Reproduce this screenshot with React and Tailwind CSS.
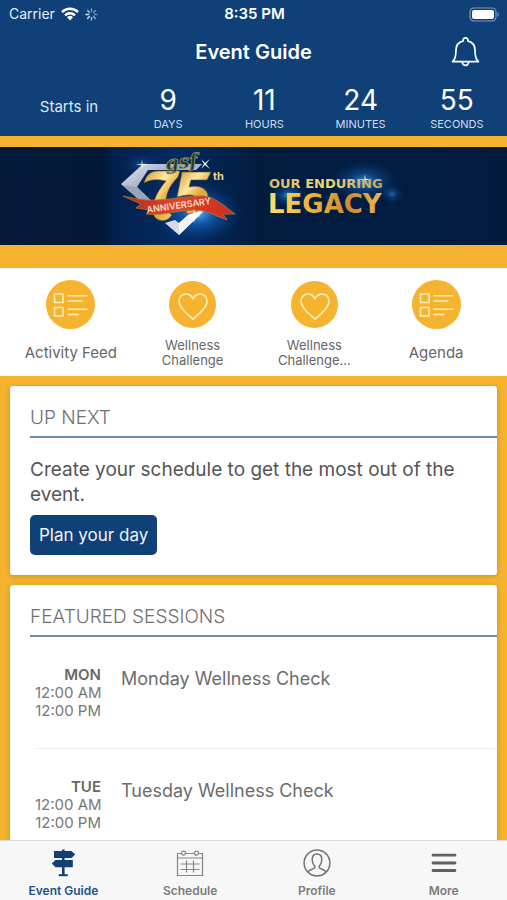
import React from "react";

const countdown = [
  { value: 9, label: "DAYS" },
  { value: 11, label: "HOURS" },
  { value: 24, label: "MINUTES" },
  { value: 55, label: "SECONDS" },
];

const sessions = [
  { day: "MON", start: "12:00 AM", end: "12:00 PM", title: "Monday Wellness Check" },
  { day: "TUE", start: "12:00 AM", end: "12:00 PM", title: "Tuesday Wellness Check" },
];

function WifiIcon() {
  return (
    <svg className="h-[14px] w-[18px]" viewBox="0 0 18 14" aria-hidden="true">
      <g fill="none" stroke="#fff" strokeWidth="2.4">
        <path d="M1 5.1A11.4 11.4 0 0 1 17 5.1" />
        <path d="M4 8.3A7.2 7.2 0 0 1 14 8.3" />
      </g>
      <path d="M6 10.3a4.3 4.3 0 0 1 6 0L9 13.6z" fill="#fff" />
    </svg>
  );
}

function SpinnerIcon() {
  return (
    <svg className="h-[13px] w-[13px]" viewBox="0 0 13 13" aria-hidden="true">
      <g stroke="#fff" strokeWidth="1.5" strokeLinecap="round">
        <path d="M6.5 1v2.6" opacity=".45" />
        <path d="M10.4 2.6 8.6 4.4" opacity=".4" />
        <path d="M12 6.5H9.4" opacity=".4" />
        <path d="M10.4 10.4 8.6 8.6" opacity=".5" />
        <path d="M6.5 12V9.4" opacity=".6" />
        <path d="M2.6 10.4 4.4 8.6" opacity=".75" />
        <path d="M1 6.5h2.6" opacity=".85" />
        <path d="M2.6 2.6 4.4 4.4" opacity=".6" />
      </g>
    </svg>
  );
}

function BatteryIcon() {
  return (
    <svg className="h-[15px] w-[31px]" viewBox="0 0 31 15" aria-hidden="true">
      <rect x="1" y="1" width="26" height="13" rx="4" fill="none" stroke="#7f99bb" strokeWidth="1.2" />
      <rect x="3" y="3" width="22" height="9" rx="2" fill="#fff" />
      <path d="M28.5 5.2c1.8.7 1.8 3.9 0 4.6z" fill="#7f99bb" />
    </svg>
  );
}

function BellIcon() {
  return (
    <svg className="h-[32px] w-[29px]" viewBox="0 0 29 32" fill="none" stroke="#fff" strokeWidth="1.7" strokeLinejoin="round" aria-hidden="true">
      <path d="M12.2 4.9a2.4 2.4 0 1 1 4.6 0c4.7 1.2 7.2 4.6 7.2 9.4 0 5.2.2 8.4 3.4 11.4H1.6C4.8 22.7 5 19.5 5 14.3c0-4.8 2.5-8.2 7.2-9.4z" />
      <path d="M11.3 25.8a3.2 3.6 0 0 0 6.4 0" />
    </svg>
  );
}

function ListIcon() {
  return (
    <svg className="h-[49px] w-[49px]" viewBox="0 0 49 49" aria-hidden="true">
      <circle cx="24.5" cy="24.5" r="24.5" fill="#f5b32f" />
      <g fill="none" stroke="#fff0b8" strokeWidth="1.5">
        <rect x="8.5" y="14" width="8.5" height="8.5" />
        <rect x="8.5" y="27.5" width="8.5" height="8.5" />
        <path d="M21.5 15.8h20M21.5 21h15M21.5 29.2h20M21.5 34.5h11" />
      </g>
    </svg>
  );
}

function HeartIcon() {
  return (
    <svg className="h-[47px] w-[47px]" viewBox="0 0 47 47" aria-hidden="true">
      <circle cx="23.5" cy="23.5" r="23.5" fill="#f5b32f" />
      <path
        d="M24 38.2C19.5 34 10 27.5 10 20.3c0-4.3 3-7.3 6.9-7.3 3 0 5.6 1.6 7.1 5 1.5-3.4 4.1-5 7.1-5 3.9 0 6.900 3 6.900 7.300 0 7.200-9.500 13.700-14 17.900z"
        fill="none"
        stroke="#fff0b8"
        strokeWidth="1.5"
        strokeLinejoin="round"
      />
    </svg>
  );
}

function SignpostIcon() {
  return (
    <svg className="h-[28px] w-[28px]" viewBox="0 0 28 28" fill="#123f78" aria-hidden="true">
      <path d="M13 .5h2.6V26H13z" />
      <path d="M5 2h17.500l3.700 3.500-3.700 3.500H5z" />
      <path d="M23.800 11H6.500L2.800 14.500 6.500 18.200h17.300z" />
      <path d="M9.800 25.200h9v2h-9z" />
    </svg>
  );
}

function CalendarIcon() {
  return (
    <svg className="h-[28px] w-[28px]" viewBox="0 0 28 28" fill="none" stroke="#858585" strokeWidth="1.2" aria-hidden="true">
      <path d="M5.5 4.5H1.5v22h25v-22h-4M9.5 4.5h9" />
      <circle cx="7.5" cy="4.2" r="2" />
      <circle cx="20.5" cy="4.2" r="2" />
      <path d="M1.5 9h25M4.5 15h19M4.5 20.5h19M10.5 11.5v12M17.5 11.5v12" />
    </svg>
  );
}

function ProfileIcon() {
  return (
    <svg className="h-[28px] w-[28px]" viewBox="0 0 28 28" fill="none" stroke="#747474" strokeWidth="1.5" aria-hidden="true">
      <circle cx="14" cy="14" r="12.9" />
      <path d="M4.7 22.8c1.5-1.7 4.3-2.4 6.3-3.4 1-.5 1-1.9.4-2.7-1.5-1.6-2.2-3.9-2.2-6.2 0-3.3 1.9-5.5 4.8-5.5s4.8 2.2 4.8 5.5c0 2.3-.7 4.6-2.2 6.2-.6.8-.6 2.2.4 2.7 2 1 4.8 1.7 6.3 3.4" />
    </svg>
  );
}

function MenuIcon() {
  return (
    <svg className="h-[28px] w-[28px]" viewBox="0 0 28 28" stroke="#616161" strokeWidth="2.8" strokeLinecap="round" aria-hidden="true">
      <path d="M3 6.2h22M3 14h22M3 21.5h22" />
    </svg>
  );
}

function Banner() {
  return (
    <svg className="block h-auto w-full" viewBox="0 0 507 98" role="img" aria-label="gsf 75th Anniversary, Our Enduring Legacy">
      <defs>
        <linearGradient id="night" x1="0" x2="1">
          <stop offset="0" stopColor="#031a3a" />
          <stop offset=".2" stopColor="#021936" />
          <stop offset=".22" stopColor="#03204b" />
          <stop offset=".35" stopColor="#042b61" />
          <stop offset=".495" stopColor="#021d42" />
          <stop offset=".505" stopColor="#011c3d" />
          <stop offset=".8" stopColor="#021d42" />
          <stop offset="1" stopColor="#031b3d" />
        </linearGradient>
        <radialGradient id="glow">
          <stop offset="0" stopColor="#5cabf0" />
          <stop offset=".35" stopColor="#1463b8" stopOpacity=".8" />
          <stop offset="1" stopColor="#063a7d" stopOpacity="0" />
        </radialGradient>
        <linearGradient id="gold" x1="0" x2="1" y1="0" y2="1">
          <stop offset="0" stopColor="#d09a35" />
          <stop offset=".35" stopColor="#ffe9a0" />
          <stop offset=".6" stopColor="#dfa53a" />
          <stop offset="1" stopColor="#f9dc82" />
        </linearGradient>
        <linearGradient id="goldText" x1="0" x2="1">
          <stop offset="0" stopColor="#f6df74" />
          <stop offset=".3" stopColor="#f4bd3c" />
          <stop offset=".7" stopColor="#d08a35" />
          <stop offset="1" stopColor="#e9b954" />
        </linearGradient>
        <linearGradient id="paleGold" x1="0" x2="1">
          <stop offset="0" stopColor="#d8bd68" />
          <stop offset=".5" stopColor="#f2d774" />
          <stop offset="1" stopColor="#bfa662" />
        </linearGradient>
        <linearGradient id="silver" x1="0" x2="1" y1="0" y2="1">
          <stop offset="0" stopColor="#e4e9f2" />
          <stop offset=".4" stopColor="#9daac2" />
          <stop offset="1" stopColor="#f1f4fa" />
        </linearGradient>
        <linearGradient id="ribbon" x1="0" x2="1">
          <stop offset="0" stopColor="#b52a1d" />
          <stop offset=".5" stopColor="#e2452b" />
          <stop offset="1" stopColor="#c72c1e" />
        </linearGradient>
      </defs>
      <rect width="507" height="98" fill="url(#night)" />
      <ellipse cx="198" cy="66" rx="44" ry="31" fill="url(#glow)" />
      <ellipse cx="142" cy="18" rx="20" ry="12" fill="url(#glow)" opacity=".35" />
      <ellipse cx="364" cy="34" rx="34" ry="20" fill="url(#glow)" opacity=".7" />
      <ellipse cx="288" cy="48" rx="18" ry="12" fill="url(#glow)" opacity=".7" />
      <ellipse cx="392" cy="47" rx="12" ry="10" fill="url(#glow)" opacity=".5" />

      <path d="M143 17 121 37l34 30 2-8-20-19 11-17h48l6-6z" fill="url(#silver)" />
      <path d="m122 38 15 2 18 18v8z" fill="#98a4ba" />
      <path d="m165 76 14 12 31-30-8-2-23 20-4-3z" fill="#d5dbe7" />
      <path d="M179 76v12l31-30-8-2z" fill="#f1f4fa" />

      <path d="M144 36c2-8 7-12 14-12h22l-2 6c-9 9-13 18-12 30 1 4 3 6 6 8-4 6-10 7-15 4-5-3-5-10-3-17 2-8 7-15 12-21-9-2-15-2-22 2z" fill="url(#gold)" stroke="#704b12" strokeWidth=".6" />
      <path d="M182 25h29l-4 8h-16l-2 7c12-3 20 3 19 11-1 9-10 15-21 16l-2-6c7-1 11-5 11-9 0-5-8-5-19-2z" fill="url(#gold)" stroke="#704b12" strokeWidth=".6" />
      <path d="m123 49 15 3c23 4 46-4 66-3 9 1 14 6 18 8l13 10h-12l4 6-17-7c-23-8-44 4-64 1l4-4-14-2 5-4z" fill="url(#ribbon)" stroke="#b3762c" strokeWidth=".8" />
      <text x="147" y="66" transform="rotate(-8 147 66)" fontFamily="Inter, sans-serif" fontSize="9" fontWeight="600" fill="#f8ddc9">ANNIVERSARY</text>
      <text x="166" y="23" transform="rotate(-6 166 23)" fontFamily="'DejaVu Serif', serif" fontSize="19" fontWeight="700" fontStyle="italic" fill="#22382f" stroke="#8f945c" strokeWidth=".8">gsf</text>
      <text x="213" y="33" fontFamily="Inter, sans-serif" fontSize="11" fontWeight="700" fill="#e8d68f">th</text>
      <g fill="#fff">
        <path d="m205 18-4 4 3-5-3-5 4 4 5-4-4 5 4 5z" />
        <path d="m142 12 .6 5 6 .6-6 .6-.6 5-.6-5-6-.6 6-.6z" opacity=".85" />
        <path d="m194 62 1 6 6 1-6 1-1 6-1-6-6-1 6-1z" />
        <path d="m365 27 .6 5 6 .6-6 .6-.6 5-.6-5-6-.6 6-.6z" />
      </g>

      <text x="269" y="41" fontFamily="'DejaVu Sans', sans-serif" fontSize="13" fontWeight="700" fill="url(#paleGold)">OUR ENDURING</text>
      <text x="268" y="66" fontFamily="'DejaVu Sans', sans-serif" fontSize="26" fontWeight="700" fill="url(#goldText)">LEGACY</text>
    </svg>
  );
}

function QuickLink({ icon, children, small }) {
  return (
    <a href="#" className="flex flex-1 flex-col items-center text-center text-[#666]">
      <span className="flex h-[49px] items-center">{icon}</span>
      <span className={small ? "mt-[9px] text-[13px] leading-[15px]" : "mt-4 text-[15px] leading-4"}>{children}</span>
    </a>
  );
}

function Tab({ icon, label, active }) {
  return (
    <a
      href="#"
      aria-current={active ? "page" : undefined}
      className={`flex flex-1 flex-col items-center pt-[8px] text-[12px] leading-4 font-semibold ${active ? "text-[#24508c]" : "text-[#7b7b7b]"}`}
    >
      {icon}
      <span className="mt-[6px]">{label}</span>
    </a>
  );
}

function Card({ title, children }) {
  return (
    <section className="rounded-[3px] bg-white pl-5 shadow-[0_1px_5px_rgba(120,75,0,0.35)]">
      <h2 className="border-b-[2px] border-[#7088b4] pt-[18px] pb-[5px] text-[19px] leading-[27px] font-light text-[#707070]">
        {title}
      </h2>
      {children}
    </section>
  );
}

export default function App() {
  return (
    <div className="flex h-screen flex-col overflow-hidden bg-[#f5b32f] font-['Inter',sans-serif]">
      <header className="bg-[#0f4078] text-white">
        <div className="grid h-7 grid-cols-3 items-center pr-[7px] pl-[9px] text-[14px] leading-4">
          <div className="flex items-center gap-[6px] text-[#e7edf5]">
            Carrier
            <WifiIcon />
            <SpinnerIcon />
          </div>
          <span className="text-center text-[15px] font-semibold">8:35 PM</span>
          <div className="flex justify-end">
            <BatteryIcon />
          </div>
        </div>
        <div className="grid h-12 grid-cols-[1fr_auto_1fr] items-center px-[27px]">
          <h1 className="col-start-2 text-[20px] leading-6 font-semibold">Event Guide</h1>
          <button type="button" aria-label="Notifications" className="justify-self-end">
            <BellIcon />
          </button>
        </div>
        <div className="flex h-[60px] pr-[2px] pl-[18px]">
          <p className="w-[102px] pt-[21px] text-center text-[15px] leading-5 text-[#dfe8f3]">Starts in</p>
          {countdown.map((c) => (
            <div key={c.label} className="flex flex-1 flex-col items-center pt-[9px]">
              <span className="text-[28px] leading-[30px]">{c.value}</span>
              <span className="text-[11px] leading-[18px] text-[#cfdcec]">{c.label}</span>
            </div>
          ))}
        </div>
      </header>

      <main className="min-h-0 flex-1 overflow-hidden">
        <div className="pt-[11px] pb-[23px]">
          <Banner />
        </div>

        <nav aria-label="Shortcuts" className="flex h-[108px] bg-white px-[10px] pt-3">
          <QuickLink icon={<ListIcon />}>Activity Feed</QuickLink>
          <QuickLink icon={<HeartIcon />} small>
            Wellness
            <br />
            Challenge
          </QuickLink>
          <QuickLink icon={<HeartIcon />} small>
            Wellness
            <br />
            Challenge...
          </QuickLink>
          <QuickLink icon={<ListIcon />}>Agenda</QuickLink>
        </nav>

        <div className="flex flex-col gap-[10px] px-[10px] pt-[10px]">
          <Card title="UP NEXT">
            <div className="pt-[19px] pr-5 pb-5">
              <p className="text-[19px] leading-[25px] text-[#555]">
                Create your schedule to get the most out of the event.
              </p>
              <button type="button" className="mt-2 h-10 rounded-[5px] bg-[#0f4078] px-[9px] text-[17px] leading-5 text-[#eef3f9]">
                Plan your day
              </button>
            </div>
          </Card>

          <Card title="FEATURED SESSIONS">
            <ul className="pl-[5px]">
              {sessions.map((s) => (
                <li key={s.day} className="flex h-[112px] gap-5 border-b border-[#eee] pt-[29px]">
                  <div className="w-[66px] text-right text-[15px] leading-[18px] text-[#777]">
                    <div className="font-semibold text-[#686868]">{s.day}</div>
                    <div className="whitespace-nowrap">{s.start}</div>
                    <div className="whitespace-nowrap">{s.end}</div>
                  </div>
                  <h3 className="text-[18px] leading-[26px] text-[#6c6c6c]">{s.title}</h3>
                </li>
              ))}
            </ul>
          </Card>
        </div>
      </main>

      <nav aria-label="Main" className="flex h-[60px] border-t border-[#dcdcdc] bg-[#f7f7f7]">
        <Tab icon={<SignpostIcon />} label="Event Guide" active />
        <Tab icon={<CalendarIcon />} label="Schedule" />
        <Tab icon={<ProfileIcon />} label="Profile" />
        <Tab icon={<MenuIcon />} label="More" />
      </nav>
    </div>
  );
}
